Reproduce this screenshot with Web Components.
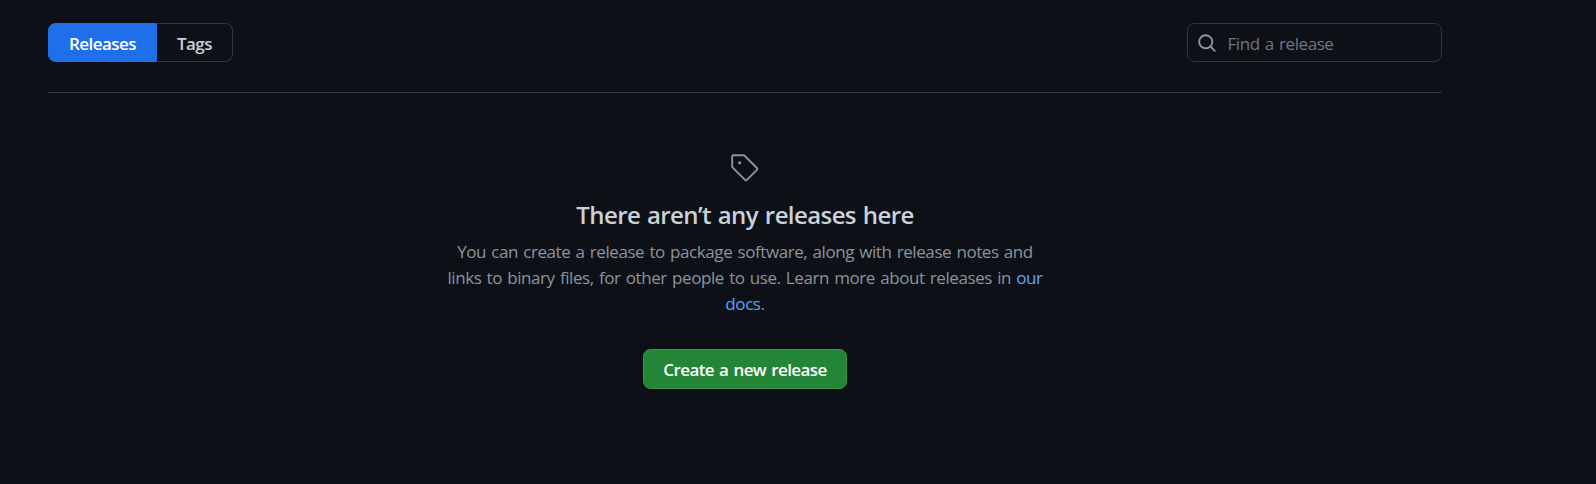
<!DOCTYPE html>
<html lang="en">
<head>
<meta charset="utf-8">
<title>Releases</title>
<style>
html, body { margin: 0; height: 100%; background: #0d1117; }
body { overflow: hidden; color: #c9d1d9; font: 400 17px/26px "Open Sans", "Noto Sans", sans-serif; word-spacing: 1.2px; }
</style>
</head>
<body>
<releases-page>
  <view-switch slot="start">
    <view-tab selected style="width:109px;letter-spacing:-.55px">Releases</view-tab>
    <view-tab style="width:76px;letter-spacing:-.5px">Tags</view-tab>
  </view-switch>
  <search-field slot="end" placeholder="Find a release"></search-field>
  <blank-slate>
    <span slot="heading">There aren’t any releases here</span>
    <span>You can create a release to package software, along with release notes and<br>links to binary files, for other people to use. Learn more about releases in <text-link>our</text-link><br><text-link>docs</text-link>.</span>
    <primary-button slot="action">Create a new release</primary-button>
  </blank-slate>
</releases-page>
<script>
function define(name, html, init) {
  const template = document.createElement('template');
  template.innerHTML = html;
  customElements.define(name, class extends HTMLElement {
    constructor() {
      super();
      this.attachShadow({ mode: 'open' }).append(template.content.cloneNode(true));
    }
    connectedCallback() { if (init) init(this); }
  });
}

define('releases-page', `
<style>
:host { display: block; box-sizing: border-box; width: 1394px; margin-left: 48px; padding-top: 23px; }
header { display: flex; justify-content: space-between; align-items: center; height: 39px; padding-bottom: 30px; border-bottom: 1px solid #30363d; }
</style>
<header><slot name="start"></slot><slot name="end"></slot></header>
<main><slot></slot></main>`);

define('view-switch', `
<style>:host { display: flex; height: 39px; }</style>
<slot></slot>`);

define('view-tab', `
<style>
:host { display: flex; align-items: center; justify-content: center; box-sizing: border-box; height: 39px; padding-top: 3px; font-weight: 600; color: #c9d1d9; border: 1px solid #30363d; border-left: 0; border-radius: 0 7.5px 7.5px 0; }
:host([selected]) { color: #fff; background: #1f6feb; border: 1px solid #1f6feb; border-radius: 7.5px 0 0 7.5px; }
</style>
<slot></slot>`);

define('search-field', `
<style>
:host { display: flex; align-items: center; box-sizing: border-box; width: 255px; height: 39px; padding-left: 9px; border: 1px solid #30363d; border-radius: 7.5px; }
svg { flex: none; width: 20px; height: 20px; margin-top: 1px; fill: #8b949e; }
span { margin: 3px 0 0 10.5px; color: #6e7681; letter-spacing: -.43px; }
</style>
<svg viewBox="0 0 16 16"><path fill-rule="evenodd" d="M11.5 7a4.499 4.499 0 11-8.998 0A4.499 4.499 0 0111.5 7zm-.82 4.74a6 6 0 111.06-1.06l3.04 3.04a.75.75 0 11-1.06 1.06l-3.04-3.04z"/></svg>
<span></span>`, el => { el.shadowRoot.querySelector('span').textContent = el.getAttribute('placeholder'); });

define('blank-slate', `
<style>
:host { display: flex; flex-direction: column; align-items: center; padding-top: 60px; text-align: center; }
svg { width: 30px; height: 30px; fill: #8b949e; }
h3 { margin: 13px 0 6px; font-size: 24px; line-height: 37px; font-weight: 600; letter-spacing: -.59px; color: #c9d1d9; }
p { margin: 0 0 32px; white-space: nowrap; color: #8b949e; letter-spacing: -.42px; }
</style>
<svg viewBox="0 0 24 24"><path d="M7.75 6.5a1.25 1.25 0 100 2.5 1.25 1.25 0 000-2.5z"/><path fill-rule="evenodd" d="M2.5 1A1.5 1.5 0 001 2.5v8.44c0 .397.158.779.44 1.06l10.25 10.25a1.5 1.5 0 002.12 0l8.44-8.44a1.5 1.5 0 000-2.12L12 1.44A1.5 1.5 0 0010.94 1H2.5zm0 1.5h8.44l10.25 10.25-8.44 8.44L2.5 10.94V2.5z"/></svg>
<h3><slot name="heading"></slot></h3>
<p><slot></slot></p>
<slot name="action"></slot>`);

define('text-link', `
<style>:host { display: inline; color: #58a6ff; }</style>
<slot></slot>`);

define('primary-button', `
<style>
:host { display: flex; align-items: center; justify-content: center; box-sizing: border-box; width: 204px; height: 40px; padding-top: 1px; font-weight: 600; letter-spacing: -.58px; color: #fff; background: #238636; border: 1px solid #399649; border-radius: 7.5px; }
</style>
<slot></slot>`);
</script>
</body>
</html>
